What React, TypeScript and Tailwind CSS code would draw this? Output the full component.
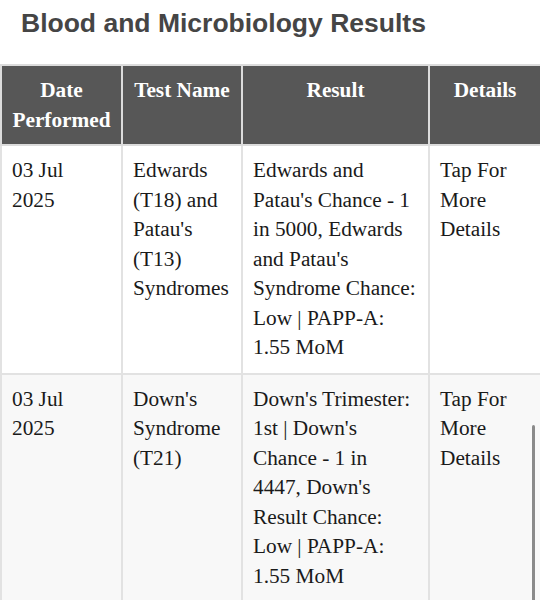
type Row = {
  date: string
  test: string
  result: string
  details: string
}

const rows: Row[] = [
  {
    date: '03 Jul 2025',
    test: "Edwards (T18) and Patau's (T13) Syndromes",
    result: "Edwards and Patau's Chance - 1 in 5000, Edwards and Patau's Syndrome Chance: Low | PAPP-A: 1.55 MoM",
    details: 'Tap For More Details',
  },
  {
    date: '03 Jul 2025',
    test: "Down's Syndrome (T21)",
    result: "Down's Trimester: 1st | Down's Chance - 1 in 4447, Down's Result Chance: Low | PAPP-A: 1.55 MoM",
    details: 'Tap For More Details',
  },
]

const th = 'border-2 border-[#dcdcdc] px-[10px] pt-[10px] pb-[9px] align-top font-bold'
const td = 'border-2 border-[#e2e2e2] px-[10px] py-[10px] align-top text-[#1a1a1a]'

export default function App() {
  return (
    <div className="relative h-[600px] w-[540px] overflow-hidden bg-white">
      <h1 className="px-[21px] pt-[8px] text-[26.5px] leading-[30px] font-bold text-[#454545] font-['Liberation_Sans',Arial,sans-serif]">
        Blood and Microbiology Results
      </h1>

      {/* Results table */}
      <table className="mt-[26px] w-full table-fixed border-collapse font-['Liberation_Serif',serif] text-[21.3px] leading-[29.5px]">
        <colgroup>
          <col className="w-[121px]" />
          <col className="w-[120px]" />
          <col className="w-[187px]" />
          <col className="w-[112px]" />
        </colgroup>
        <thead>
          <tr className="bg-[#575757] text-white">
            <th className={th}>Date Performed</th>
            <th className={th}>Test Name</th>
            <th className={th}>Result</th>
            <th className={th}>Details</th>
          </tr>
        </thead>
        <tbody>
          {rows.map((row, idx) => (
            <tr key={idx} className={idx % 2 === 1 ? 'bg-[#f8f8f8]' : 'bg-white'}>
              <td className={td + ' pr-[14px]'}>{row.date}</td>
              <td className={td}>{row.test}</td>
              <td className={td}>{row.result}</td>
              <td className={td}>{row.details}</td>
            </tr>
          ))}
        </tbody>
      </table>

      {/* scrollbar thumb */}
      <div className="absolute right-[5px] top-[425px] h-[180px] w-[3px] rounded-full bg-[#8a8a8a]" />
    </div>
  )
}
